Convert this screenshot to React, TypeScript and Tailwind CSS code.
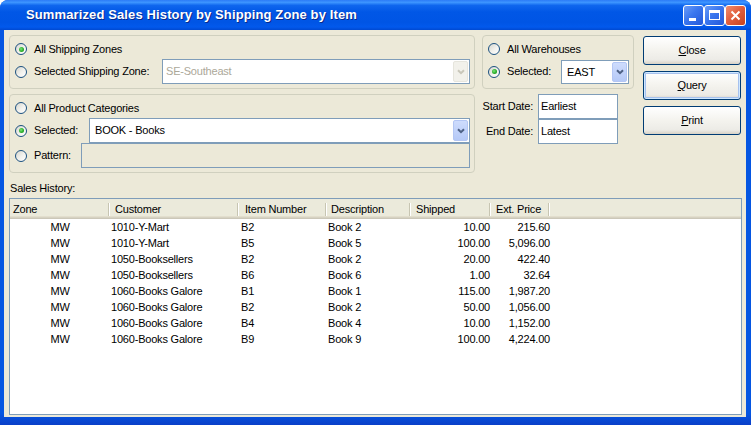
import React from "react";

const rows = [
  ["MW", "1010-Y-Mart", "B2", "Book 2", "10.00", "215.60"],
  ["MW", "1010-Y-Mart", "B5", "Book 5", "100.00", "5,096.00"],
  ["MW", "1050-Booksellers", "B2", "Book 2", "20.00", "422.40"],
  ["MW", "1050-Booksellers", "B6", "Book 6", "1.00", "32.64"],
  ["MW", "1060-Books Galore", "B1", "Book 1", "115.00", "1,987.20"],
  ["MW", "1060-Books Galore", "B2", "Book 2", "50.00", "1,056.00"],
  ["MW", "1060-Books Galore", "B4", "Book 4", "10.00", "1,152.00"],
  ["MW", "1060-Books Galore", "B9", "Book 9", "100.00", "4,224.00"],
];

function Radio({ checked = false }: { checked?: boolean }) {
  return (
    <span className="inline-flex items-center justify-center w-[12px] h-[12px] shrink-0 rounded-full border border-[#1C5180] bg-[linear-gradient(135deg,#D6D6CE_0%,#F2F2EE_55%,#FFFFFF_100%)]">
      {checked && (
        <span className="w-[5px] h-[5px] rounded-full bg-[radial-gradient(circle_at_40%_40%,#7BE57A_0%,#2AAE2A_55%,#1A8A1A_100%)]" />
      )}
    </span>
  );
}

function Chevron({ color }: { color: string }) {
  return (
    <svg width="8" height="6" viewBox="0 0 8 6">
      <path d="M1 1.2 L4 4.2 L7 1.2" stroke={color} strokeWidth="2" fill="none" />
    </svg>
  );
}

function DropBtn({ disabled = false }: { disabled?: boolean }) {
  return disabled ? (
    <div className="w-[15px] shrink-0 flex items-center justify-center rounded-[2px] bg-[#F2F1EB] border border-[#E6E5DD]">
      <Chevron color="#C9C7BA" />
    </div>
  ) : (
    <div className="w-[15px] shrink-0 flex items-center justify-center rounded-[2px] bg-[linear-gradient(to_bottom,#CEDCFD,#B5C9F7)] border border-[#B3C6F4]">
      <Chevron color="#4D6185" />
    </div>
  );
}

function XPButton({ children, focused = false }: { children: React.ReactNode; focused?: boolean }) {
  return focused ? (
    <div className="w-[98px] h-[29px] rounded-[3px] border border-[#003C74] bg-[linear-gradient(to_bottom,#FFFFFF_0%,#F4F3EE_50%,#ECEBE6_85%,#D8D2C6_100%)] shadow-[inset_0_0_0_1px_#CEE7FF,inset_0_0_0_2px_#A6C1EE] flex items-center justify-center text-black">
      {children}
    </div>
  ) : (
    <div className="w-[98px] h-[29px] rounded-[3px] border border-[#003C74] bg-[linear-gradient(to_bottom,#FFFFFF_0%,#F4F3EE_50%,#ECEBE6_85%,#D8D2C6_100%)] flex items-center justify-center text-black">
      {children}
    </div>
  );
}

export default function App() {
  return (
    <div className="w-[751px] h-[425px] bg-white font-['Liberation_Sans',Arial,sans-serif] text-[11px] tracking-[-0.2px] text-black">
      <div className="w-[751px] h-[425px] flex flex-col rounded-t-[8px] overflow-hidden bg-[#0556E2]">
        {/* Title bar */}
        <div className="h-[30px] shrink-0 flex items-center pl-[26px] pr-[5px] bg-[linear-gradient(to_bottom,#2C7BF7_0%,#3D95FF_8%,#0F66EE_18%,#0157E6_40%,#0055E5_75%,#0259EC_90%,#0049D2_100%)]">
          <div className="flex-1 text-white font-bold text-[13px] tracking-[0.12px] [text-shadow:1px_1px_0_#0A2A8A]">
            Summarized Sales History by Shipping Zone by Item
          </div>
          <div className="flex">
            <div className="w-[21px] h-[21px] rounded-[3px] border border-white bg-[linear-gradient(135deg,#6A9CF8_0%,#3A76EE_45%,#2358DA_100%)] flex items-end pl-[5px] pb-[4px]">
              <div className="w-[7px] h-[3px] bg-white" />
            </div>
            <div className="w-[21px] h-[21px] rounded-[3px] border border-white bg-[linear-gradient(135deg,#6A9CF8_0%,#3A76EE_45%,#2358DA_100%)] flex items-center justify-center">
              <div className="w-[11px] h-[10px] border border-white border-t-[3px]" />
            </div>
            <div className="w-[21px] h-[21px] rounded-[3px] border border-white bg-[linear-gradient(135deg,#F08E6E_0%,#E2603F_45%,#C8421F_100%)] flex items-center justify-center">
              <svg width="11" height="11" viewBox="0 0 11 11">
                <path d="M1.5 1.5 L9.5 9.5 M9.5 1.5 L1.5 9.5" stroke="white" strokeWidth="2" />
              </svg>
            </div>
          </div>
        </div>

        {/* Frame body */}
        <div className="flex-1 flex pl-[4px] pr-[5px] pb-[8px] bg-[linear-gradient(to_bottom,#0556E2_0%,#0556E2_97%,#0A3FC8_100%)]">
          <div className="flex-1 bg-[#ECE9D8] flex flex-col pl-[5px] pt-[5px]">
            {/* top section */}
            <div className="flex h-[138px]">
              {/* column 1 */}
              <div className="w-[466px] flex flex-col gap-[5px]">
                <div className="h-[54px] rounded-[4px] border border-[#D0D0BF] pt-[5px] pl-[5px] pr-[4px] flex flex-col">
                  <div className="h-[16px] flex items-center">
                    <Radio checked />
                    <span className="ml-[7px]">All Shipping Zones</span>
                  </div>
                  <div className="h-[25px] mt-[2px] flex items-center">
                    <Radio />
                    <span className="ml-[7px]">Selected Shipping Zone:</span>
                    <div className="ml-auto w-[308px] h-[25px] flex items-stretch border border-[#7F9DB9] bg-white p-[1px]">
                      <div className="flex-1 flex items-center pl-[2px] text-[#ACA899]">SE-Southeast</div>
                      <DropBtn disabled />
                    </div>
                  </div>
                </div>
                <div className="h-[79px] rounded-[4px] border border-[#D0D0BF] pt-[5px] pl-[5px] pr-[4px] flex flex-col">
                  <div className="h-[16px] flex items-center">
                    <Radio />
                    <span className="ml-[7px]">All Product Categories</span>
                  </div>
                  <div className="h-[25px] mt-[2px] flex items-center">
                    <Radio checked />
                    <span className="ml-[7px]">Selected:</span>
                    <div className="ml-auto w-[381px] h-[25px] flex items-stretch border border-[#7F9DB9] bg-white p-[1px]">
                      <div className="flex-1 flex items-center pl-[4px]">BOOK - Books</div>
                      <DropBtn />
                    </div>
                  </div>
                  <div className="h-[25px] flex items-center">
                    <Radio />
                    <span className="ml-[7px]">Pattern:</span>
                    <div className="ml-auto w-[389px] h-[25px] border border-[#7F9DB9] bg-[#ECE9D8]" />
                  </div>
                </div>
              </div>

              {/* column 2 */}
              <div className="ml-[7px] w-[152px] flex flex-col">
                <div className="h-[54px] rounded-[4px] border border-[#D0D0BF] pt-[5px] pl-[5px] pr-[4px] flex flex-col">
                  <div className="h-[16px] flex items-center">
                    <Radio />
                    <span className="ml-[7px]">All Warehouses</span>
                  </div>
                  <div className="h-[25px] mt-[2px] flex items-center">
                    <Radio checked />
                    <span className="ml-[7px]">Selected:</span>
                    <div className="ml-auto w-[68px] h-[24px] mt-[1px] flex items-stretch border border-[#7F9DB9] bg-white p-[1px]">
                      <div className="flex-1 flex items-center pl-[4px]">EAST</div>
                      <DropBtn />
                    </div>
                  </div>
                </div>
                <div className="mt-[5px] flex flex-col">
                  <div className="h-[25px] flex items-center">
                    <span className="w-[56px] text-right pr-[5px]">Start Date:</span>
                    <div className="w-[80px] h-[25px] border border-[#7F9DB9] bg-white flex items-center pl-[2px]">Earliest</div>
                  </div>
                  <div className="h-[25px] flex items-center">
                    <span className="w-[56px] text-right pr-[5px]">End Date:</span>
                    <div className="w-[80px] h-[25px] border border-[#7F9DB9] bg-white flex items-center pl-[2px]">Latest</div>
                  </div>
                </div>
              </div>

              {/* column 3 */}
              <div className="ml-[9px] w-[98px] flex flex-col gap-[6px] pt-[1px]">
                <XPButton>
                  <span><span className="underline">C</span>lose</span>
                </XPButton>
                <XPButton focused>
                  <span><span className="underline">Q</span>uery</span>
                </XPButton>
                <XPButton>
                  <span><span className="underline">P</span>rint</span>
                </XPButton>
              </div>
            </div>

            {/* Sales History */}
            <div className="mt-[8px] h-[14px] leading-[14px] pl-[1px]">Sales History:</div>
            <div className="mt-[3px] w-[733px] h-[217px] border border-[#7F9DB9] bg-white flex flex-col">
              <div className="h-[20px] shrink-0 grid grid-cols-[100px_129px_88px_84px_80px_59px] bg-[#EBEADB] shadow-[inset_0_-1px_0_#CBC7B8,inset_0_-2px_0_#D6D2C2,inset_0_-3px_0_#E2DECD]">
                {[
                  ["Zone", "pl-[3px]"],
                  ["Customer", "pl-[5px]"],
                  ["Item Number", "pl-[6px]"],
                  ["Description", "pl-[4px]"],
                  ["Shipped", "pl-[5px]"],
                  ["Ext. Price", "pl-[5px]"],
                ].map(([t, p]) => (
                  <div key={t} className="flex items-center">
                    <span className={`flex-1 whitespace-nowrap overflow-hidden ${p}`}>{t}</span>
                    <span className="w-[2px] h-[13px] border-l border-[#C7C5B2] border-r border-r-white" />
                  </div>
                ))}
              </div>
              <div className="flex flex-col">
                {rows.map((r, i) => (
                  <div key={i} className="h-[16px] leading-[16px] grid grid-cols-[100px_129px_88px_84px_80px_59px] whitespace-nowrap">
                    <div className="text-center">{r[0]}</div>
                    <div className="pl-[1px]">{r[1]}</div>
                    <div className="pl-[2px]">{r[2]}</div>
                    <div className="pl-[1px]">{r[3]}</div>
                    <div className="text-right pr-[1px]">{r[4]}</div>
                    <div className="text-right pr-[0px]">{r[5]}</div>
                  </div>
                ))}
              </div>
            </div>
          </div>
        </div>
      </div>
    </div>
  );
}
